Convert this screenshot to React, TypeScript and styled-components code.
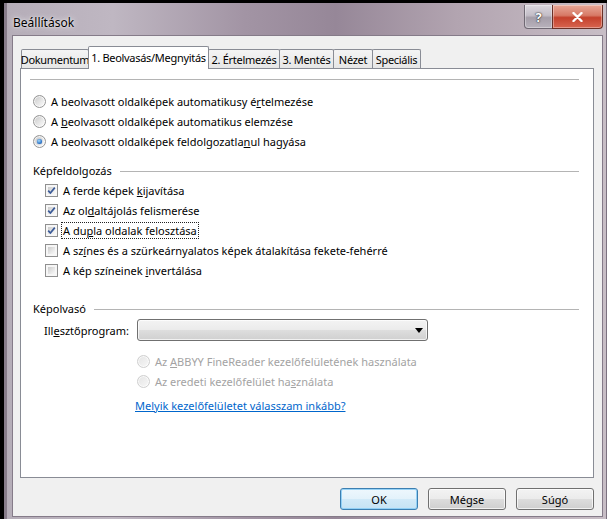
import * as React from 'react'
import styled, { createGlobalStyle } from 'styled-components'

const FONT = `'Noto Sans', 'Open Sans', 'DejaVu Sans', sans-serif`

const GlobalStyle = createGlobalStyle`
  html, body {
    margin: 0;
    padding: 0;
    background: #000;
  }
  body {
    font-family: ${FONT};
    font-size: 11px;
    color: #000;
  }
`

const Window = styled.div`
  width: 607px;
  height: 519px;
  box-sizing: border-box;
  padding: 3px 0 0 4px;
  background: #000;
  display: flex;
`

const Frame = styled.div`
  flex: 1;
  display: flex;
  flex-direction: column;
  padding: 0 4px 2px 8px;
  background: linear-gradient(
    90deg,
    #b5adb8 0%,
    #bfb7c2 18%,
    #a294a4 40%,
    #968798 55%,
    #b2a4b0 75%,
    #c8bec6 100%
  );
  box-shadow: inset 3px 0 0 #877c8a, inset -1px 0 0 #7c7280;
`

const TitleBar = styled.div`
  height: 32px;
  display: flex;
  align-items: flex-start;
  justify-content: space-between;
`

const Title = styled.div`
  padding: 12px 0 0 1px;
  line-height: 16px;
  font-size: 12px;
  text-shadow: 0 0 6px rgba(255, 255, 255, 0.9), 0 0 2px rgba(255, 255, 255, 0.8);
`

const CaptionButtons = styled.div`
  display: flex;
  margin-top: 2px;
`

const CaptionButton = styled.div<{ $close?: boolean }>`
  box-sizing: border-box;
  width: ${p => (p.$close ? 51 : 29)}px;
  height: 24px;
  display: flex;
  align-items: center;
  justify-content: center;
  border: 1px solid ${p => (p.$close ? '#6a3026' : '#6f6873')};
  border-top: none;
  border-radius: ${p => (p.$close ? '0 0 4px 0' : '0 0 0 4px')};
  margin-left: ${p => (p.$close ? -1 : 0)}px;
  background: ${p =>
    p.$close
      ? 'linear-gradient(#e8a898 0%, #d77a66 45%, #c4412c 55%, #d8654f 100%)'
      : 'linear-gradient(#dcd8df 0%, #c3bdc7 45%, #a59ea9 55%, #b8b2bc 100%)'};
  box-shadow: inset 0 0 0 1px rgba(255, 255, 255, 0.35);
  color: #fff;
  font-weight: bold;
  font-size: 13px;
  text-shadow: 0 0 2px #333, 0 0 1px #000;
`

const Client = styled.div`
  flex: 1;
  min-height: 0;
  display: flex;
  flex-direction: column;
  background: #f0f0f0;
  border: 1px solid #857b89;
  padding: 10px 8px 6px 7px;
`

const TabStrip = styled.div`
  display: flex;
  align-items: flex-end;
  height: 22px;
  padding-left: 1px;
  position: relative;
  z-index: 1;
`

const Tab = styled.div<{ $w: number; $active?: boolean }>`
  box-sizing: border-box;
  width: ${p => p.$w}px;
  height: ${p => (p.$active ? 23 : 19)}px;
  margin-bottom: ${p => (p.$active ? -1 : 0)}px;
  margin-left: -1px;
  &:first-child {
    margin-left: 0;
  }
  display: flex;
  align-items: center;
  justify-content: center;
  border: 1px solid #898c95;
  border-bottom: none;
  border-radius: 2px 2px 0 0;
  background: ${p => (p.$active ? '#fff' : 'linear-gradient(#f4f4f4, #e6e6e6)')};
  position: relative;
  z-index: ${p => (p.$active ? 2 : 1)};
  white-space: nowrap;
  letter-spacing: -0.3px;
  padding-bottom: ${p => (p.$active ? 2 : 0)}px;
`

const Panel = styled.div`
  flex: 1;
  display: flex;
  flex-direction: column;
  background: #fff;
  border: 1px solid #898c95;
  padding: 0 14px 0 9px;
`

const Rule = styled.div`
  height: 1px;
  margin-top: 10px;
  background: #b4b4b4;
`

const OptionList = styled.div<{ $indent: number; $top: number }>`
  display: flex;
  flex-direction: column;
  padding-left: ${p => p.$indent}px;
  margin-top: ${p => p.$top}px;
`

const OptionRow = styled.div<{ $disabled?: boolean }>`
  display: flex;
  align-items: center;
  gap: 5px;
  height: 20px;
  white-space: nowrap;
  color: ${p => (p.$disabled ? '#a3a3a3' : '#000')};
`

const Radio = styled.span<{ $checked?: boolean; $disabled?: boolean }>`
  box-sizing: border-box;
  width: 13px;
  height: 13px;
  flex: none;
  border-radius: 50%;
  border: 1px solid ${p => (p.$disabled ? '#cfcfcf' : '#959595')};
  background: ${p =>
    p.$disabled
      ? 'linear-gradient(135deg, #e4e4e4, #f7f7f7)'
      : 'linear-gradient(135deg, #c8c8c8, #efefef 70%, #fafafa)'};
  box-shadow: inset 0 0 0 1px rgba(255, 255, 255, 0.7);
  display: flex;
  align-items: center;
  justify-content: center;

  &::after {
    content: '';
    display: ${p => (p.$checked ? 'block' : 'none')};
    width: 5px;
    height: 5px;
    border-radius: 50%;
    background: radial-gradient(circle at 40% 35%, #a8dcfa, #2f78cc 60%, #1b4f96);
    box-shadow: 0 0 1px #1b4f96;
  }
`

const Checkbox = styled.span`
  box-sizing: border-box;
  width: 13px;
  height: 13px;
  flex: none;
  border: 1px solid #8f8f8f;
  padding: 2px;
  background: linear-gradient(135deg, #cbcbcb, #ececec 70%, #f8f8f8) content-box, #f6f6f6;
  position: relative;

  svg {
    position: absolute;
    left: 0;
    top: 0;
  }
`

const Key = styled.span`
  text-decoration: underline;
`

const Focused = styled.span`
  outline: 1px dotted #222;
  padding: 0 1px;
  margin-left: -1px;
`

const SectionHeading = styled.div<{ $top: number }>`
  display: flex;
  align-items: center;
  gap: 8px;
  height: 16px;
  margin-top: ${p => p.$top}px;
  padding-left: 3px;
  white-space: nowrap;

  &::after {
    content: '';
    flex: 1;
    height: 1px;
    margin-top: 2px;
    background: #b4b4b4;
  }
`

const FieldRow = styled.div`
  display: flex;
  align-items: center;
  height: 22px;
  margin-top: 3px;
  padding-left: 14px;
`

const FieldLabel = styled.span`
  width: 93px;
  flex: none;
  white-space: nowrap;
`

const Combo = styled.div`
  box-sizing: border-box;
  width: 291px;
  height: 22px;
  border: 1px solid #707070;
  border-radius: 3px;
  background: linear-gradient(#f3f3f3 0%, #ebebeb 49%, #dedede 50%, #d0d0d0 100%);
  box-shadow: inset 0 0 0 1px rgba(255, 255, 255, 0.7);
  display: flex;
  align-items: center;
  justify-content: flex-end;
  padding-right: 4px;
`

const LinkRow = styled.div`
  height: 20px;
  display: flex;
  align-items: center;
  padding-left: 105px;
  margin-top: 4px;
`

const Link = styled.a`
  color: #0066cc;
  text-decoration: underline;
  cursor: pointer;
  white-space: nowrap;
`

const ButtonRow = styled.div`
  display: flex;
  justify-content: flex-end;
  gap: 10px;
  margin-top: 10px;
`

const Button = styled.div<{ $default?: boolean }>`
  box-sizing: border-box;
  width: 78px;
  height: 22px;
  display: flex;
  align-items: center;
  justify-content: center;
  border: 1px solid ${p => (p.$default ? '#3c7fb1' : '#707070')};
  border-radius: 3px;
  background: ${p =>
    p.$default
      ? 'linear-gradient(#eef7fd 0%, #e3f2fb 49%, #d2eaf8 50%, #c6e3f4 100%)'
      : 'linear-gradient(#f3f3f3 0%, #ebebeb 49%, #dddddd 50%, #cfcfcf 100%)'};
  box-shadow: inset 0 0 0 1px ${p => (p.$default ? 'rgba(140, 205, 245, 0.9)' : 'rgba(255, 255, 255, 0.7)')};
`

const CheckMark = () => (
  <svg width="11" height="11" viewBox="0 0 11 11">
    <path d="M2.2 5.6 L4.4 8 L8.8 2.6" fill="none" stroke="#3a5a98" strokeWidth="1.7" />
  </svg>
)

const tabs = [
  { label: 'Dokumentum', w: 68 },
  { label: '1. Beolvasás/Megnyitás', w: 121, active: true },
  { label: '2. Értelmezés', w: 72 },
  { label: '3. Mentés', w: 55 },
  { label: 'Nézet', w: 40 },
  { label: 'Speciális', w: 49 },
]

const App = () => (
  <Window>
    <GlobalStyle />
    <Frame>
      <TitleBar>
        <Title>Beállítások</Title>
        <CaptionButtons>
          <CaptionButton>?</CaptionButton>
          <CaptionButton $close>
            <svg width="11" height="10" viewBox="0 0 11 10">
              <path d="M1.5 1 L9.5 9 M9.5 1 L1.5 9" stroke="#fff" strokeWidth="2.4" strokeLinecap="round" />
            </svg>
          </CaptionButton>
        </CaptionButtons>
      </TitleBar>

      <Client>
        <TabStrip>
          {tabs.map(t => (
            <Tab key={t.label} $w={t.w} $active={t.active}>
              {t.label}
            </Tab>
          ))}
        </TabStrip>

        <Panel>
          <Rule />

          <OptionList $indent={3} $top={11}>
            <OptionRow>
              <Radio />
              <span>
                A beolvasott oldalképek automatikusy é<Key>r</Key>telmezése
              </span>
            </OptionRow>
            <OptionRow>
              <Radio />
              <span>
                A <Key>b</Key>eolvasott oldalképek automatikus elemzése
              </span>
            </OptionRow>
            <OptionRow>
              <Radio $checked />
              <span>
                A beolvasott oldalképek feldolgozatla<Key>n</Key>ul hagyása
              </span>
            </OptionRow>
          </OptionList>

          <SectionHeading $top={11}>Képfeldolgozás</SectionHeading>
          <OptionList $indent={15} $top={2}>
            <OptionRow>
              <Checkbox>
                <CheckMark />
              </Checkbox>
              <span>
                A ferde képek <Key>k</Key>ijavítása
              </span>
            </OptionRow>
            <OptionRow>
              <Checkbox>
                <CheckMark />
              </Checkbox>
              <span>
                Az ol<Key>d</Key>altájolás felismerése
              </span>
            </OptionRow>
            <OptionRow>
              <Checkbox>
                <CheckMark />
              </Checkbox>
              <Focused>
                A du<Key>p</Key>la oldalak felosztása
              </Focused>
            </OptionRow>
            <OptionRow>
              <Checkbox />
              <span>
                A sz<Key>í</Key>nes és a szürkeárnyalatos képek átalakítása fekete-fehérré
              </span>
            </OptionRow>
            <OptionRow>
              <Checkbox />
              <span>
                A kép színeinek <Key>i</Key>nvertálása
              </span>
            </OptionRow>
          </OptionList>

          <SectionHeading $top={20}>Képolvasó</SectionHeading>
          <FieldRow>
            <FieldLabel>
              Ill<Key>e</Key>sztőprogram:
            </FieldLabel>
            <Combo>
              <svg width="8" height="5" viewBox="0 0 8 5">
                <path d="M0 0 H8 L4 5 Z" fill="#000" />
              </svg>
            </Combo>
          </FieldRow>

          <OptionList $indent={107} $top={10}>
            <OptionRow $disabled>
              <Radio $disabled />
              <span>
                Az <Key>A</Key>BBYY FineReader kezelőfelületének használata
              </span>
            </OptionRow>
            <OptionRow $disabled>
              <Radio $disabled />
              <span>
                Az eredeti kezelőfelület ha<Key>s</Key>ználata
              </span>
            </OptionRow>
          </OptionList>

          <LinkRow>
            <Link>Melyik kezelőfelületet válasszam inkább?</Link>
          </LinkRow>
        </Panel>

        <ButtonRow>
          <Button $default>OK</Button>
          <Button>Mégse</Button>
          <Button>Súgó</Button>
        </ButtonRow>
      </Client>
    </Frame>
  </Window>
)

export default App
